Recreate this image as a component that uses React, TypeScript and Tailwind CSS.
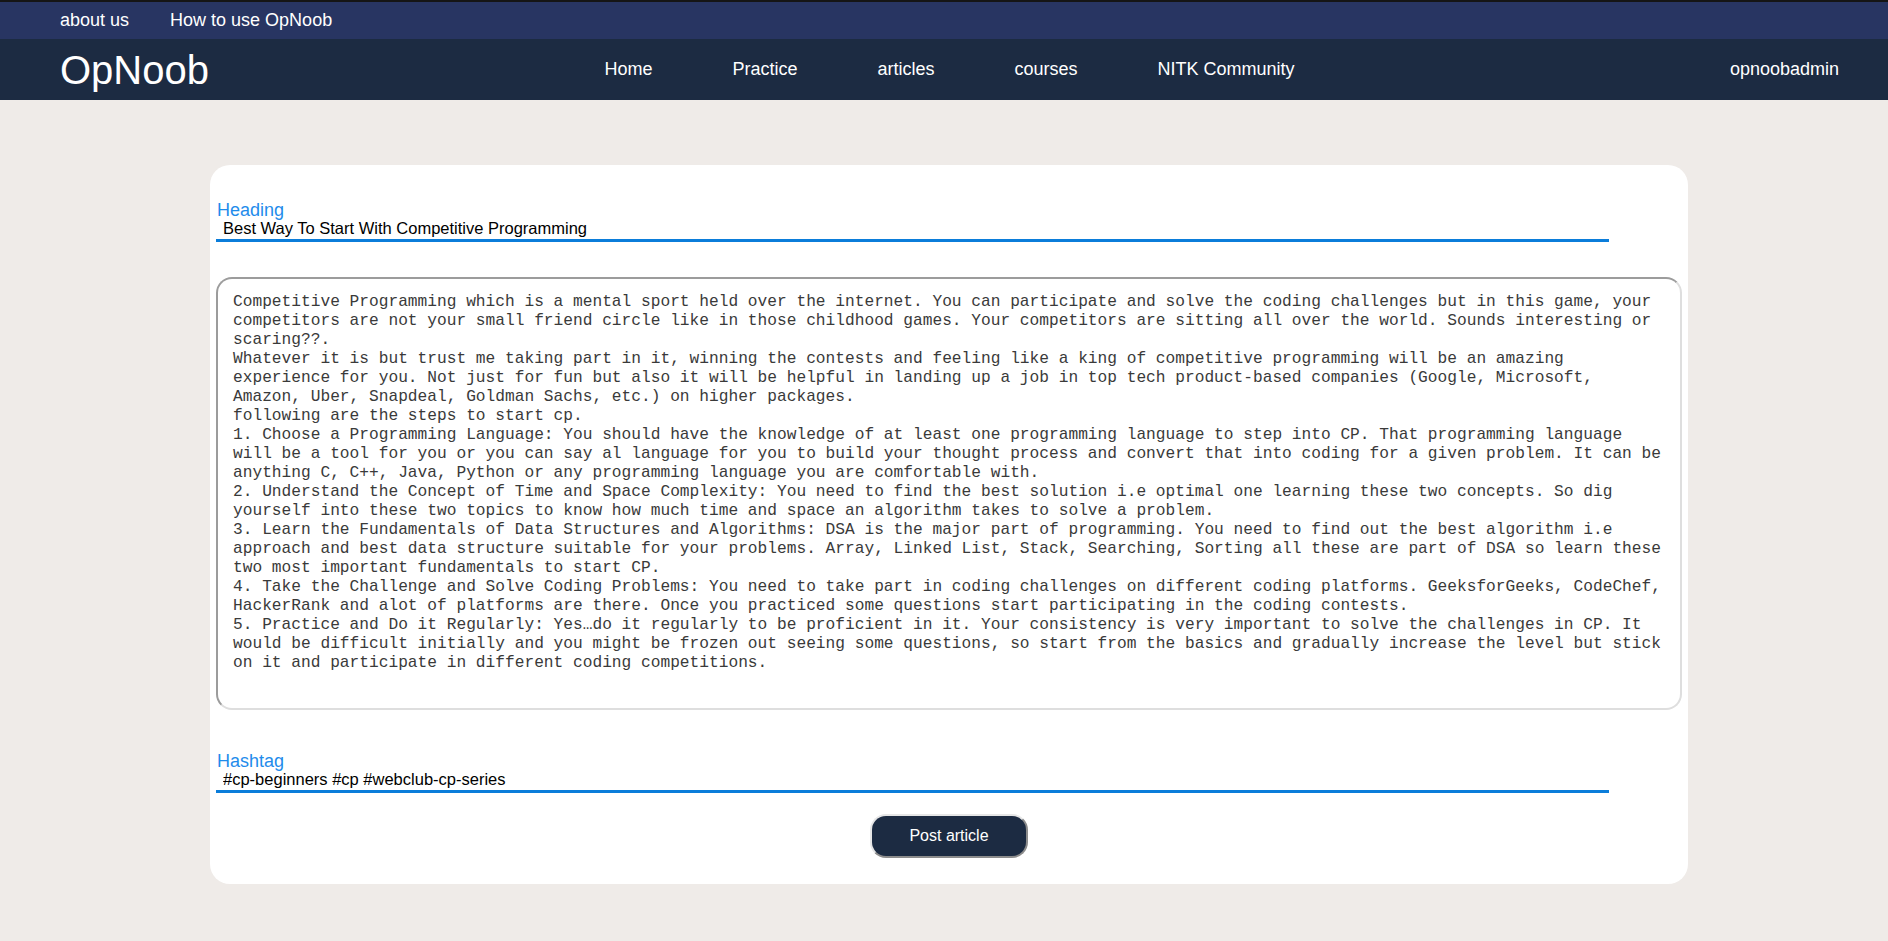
import { useState } from 'react'

const navLinks = ['Home', 'Practice', 'articles', 'courses', 'NITK Community']

const articleLines = [
  'Competitive Programming which is a mental sport held over the internet. You can participate and solve the coding challenges but in this game, your',
  'competitors are not your small friend circle like in those childhood games. Your competitors are sitting all over the world. Sounds interesting or',
  'scaring??.',
  'Whatever it is but trust me taking part in it, winning the contests and feeling like a king of competitive programming will be an amazing',
  'experience for you. Not just for fun but also it will be helpful in landing up a job in top tech product-based companies (Google, Microsoft,',
  'Amazon, Uber, Snapdeal, Goldman Sachs, etc.) on higher packages.',
  'following are the steps to start cp.',
  '1. Choose a Programming Language: You should have the knowledge of at least one programming language to step into CP. That programming language',
  'will be a tool for you or you can say al language for you to build your thought process and convert that into coding for a given problem. It can be',
  'anything C, C++, Java, Python or any programming language you are comfortable with.',
  '2. Understand the Concept of Time and Space Complexity: You need to find the best solution i.e optimal one learning these two concepts. So dig',
  'yourself into these two topics to know how much time and space an algorithm takes to solve a problem.',
  '3. Learn the Fundamentals of Data Structures and Algorithms: DSA is the major part of programming. You need to find out the best algorithm i.e',
  'approach and best data structure suitable for your problems. Array, Linked List, Stack, Searching, Sorting all these are part of DSA so learn these',
  'two most important fundamentals to start CP.',
  '4. Take the Challenge and Solve Coding Problems: You need to take part in coding challenges on different coding platforms. GeeksforGeeks, CodeChef,',
  'HackerRank and alot of platforms are there. Once you practiced some questions start participating in the coding contests.',
  '5. Practice and Do it Regularly: Yes\u2026do it regularly to be proficient in it. Your consistency is very important to solve the challenges in CP. It',
  'would be difficult initially and you might be frozen out seeing some questions, so start from the basics and gradually increase the level but stick',
  'on it and participate in different coding competitions.',
]

function UnderlineField({ label, value, onChange }: { label: string; value: string; onChange: (v: string) => void }) {
  return (
    <div>
      <label className="ml-[1px] block text-[18px] leading-[20px] text-[#1f8ceb]">{label}</label>
      <input
        value={value}
        onChange={(e) => onChange(e.target.value)}
        className="block h-[22px] w-[95%] border-b-[3px] border-[#0b7dda] bg-transparent pb-[2px] pl-[7px] text-[16.5px] leading-[17px] text-black outline-none"
      />
    </div>
  )
}

export default function App() {
  const [heading, setHeading] = useState('Best Way To Start With Competitive Programming')
  const [hashtag, setHashtag] = useState('#cp-beginners #cp #webclub-cp-series')

  return (
    <div className="min-h-screen bg-[#efebe8] font-['Liberation_Sans',Arial,sans-serif]">
      <header>
        <div className="flex h-[39px] items-center gap-[41px] border-t-2 border-[#151515] bg-[#283562] pl-[60px] text-[18px] text-white">
          <a>about us</a>
          <a>How to use OpNoob</a>
        </div>
        <nav className="grid h-[61px] grid-cols-[1fr_auto_1fr] items-center bg-[#1c2b42] pr-[49px] pl-[60px] text-white">
          <div className="text-[40px] leading-none">OpNoob</div>
          <ul className="flex text-[18px]">
            {navLinks.map((l) => (
              <li key={l} className="px-10">
                {l}
              </li>
            ))}
          </ul>
          <div className="justify-self-end text-[18px]">opnoobadmin</div>
        </nav>
      </header>

      <main className="pt-[65px] pb-[56px]">
        <form
          onSubmit={(e) => e.preventDefault()}
          className="ml-[210px] w-[1478px] rounded-[20px] bg-white px-[6px] pt-[35px] pb-[26px]"
        >
          <UnderlineField label="Heading" value={heading} onChange={setHeading} />

          {/* article body, line breaks kept as in the original */}
          <div className="mt-[35px] h-[433px] overflow-hidden rounded-[16px] border-2 border-t-[#9c9c9c] border-r-[#dedede] border-b-[#dedede] border-l-[#9c9c9c] px-[15px] pt-[14px] font-['Liberation_Mono','Courier_New',monospace] text-[16.2px] leading-[19px] whitespace-pre text-[#3a3a3a]">
            {articleLines.join('\n')}
          </div>

          <div className="mt-[41px]">
            <UnderlineField label="Hashtag" value={hashtag} onChange={setHashtag} />
          </div>

          <div className="mt-[21px] flex justify-center">
            <button
              type="submit"
              className="h-[44px] w-[158px] rounded-[16px] border-2 border-t-[#e6e6e6] border-r-[#8c8c8c] border-b-[#8c8c8c] border-l-[#e6e6e6] bg-[#1c2b42] text-[16px] text-white"
            >
              Post article
            </button>
          </div>
        </form>
      </main>
    </div>
  )
}
